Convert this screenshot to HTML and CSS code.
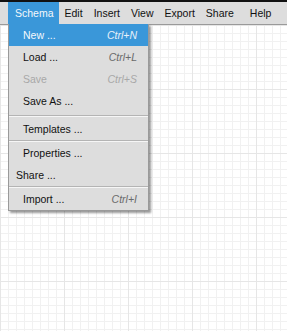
FILE: index.html
```html
<!DOCTYPE html>
<html>
<head>
<meta charset="utf-8">
<link rel="stylesheet" href="styles.css">
</head>
<body>
<div class="app">
  <nav class="menubar">
    <span class="mb-item active">Schema</span>
    <span class="mb-item">Edit</span>
    <span class="mb-item">Insert</span>
    <span class="mb-item">View</span>
    <span class="mb-item">Export</span>
    <span class="mb-item">Share</span>
    <span class="mb-item help">Help</span>
  </nav>
  <div class="canvas"></div>
  <div class="dropdown">
    <div class="dd-item selected"><span>New ...</span><span class="key">Ctrl+N</span></div>
    <div class="dd-item"><span>Load ...</span><span class="key">Ctrl+L</span></div>
    <div class="dd-item disabled"><span>Save</span><span class="key">Ctrl+S</span></div>
    <div class="dd-item"><span>Save As ...</span></div>
    <div class="sep sep1"></div>
    <div class="dd-item"><span>Templates ...</span></div>
    <div class="sep"></div>
    <div class="dd-item"><span>Properties ...</span></div>
    <div class="dd-item outdent"><span>Share ...</span></div>
    <div class="sep"></div>
    <div class="dd-item"><span>Import ...</span><span class="key">Ctrl+I</span></div>
  </div>
</div>
</body>
</html>
```
FILE: styles.css
```css
html, body {
  margin: 0;
  padding: 0;
  height: 100%;
}
body {
  font-family: "Liberation Sans", Arial, sans-serif;
  font-size: 10.5px;
  color: #111;
  background: #fff;
}
.app {
  position: relative;
  height: 100%;
  display: flex;
  flex-direction: column;
}
.menubar {
  display: flex;
  height: 22px;
  background: #dddddd;
  border-top: 2px solid #111;
  border-bottom: 1px solid #9a9a9a;
  padding-left: 8px;
}
.mb-item {
  display: flex;
  align-items: center;
  padding: 0 5px 0 7px;
}
.mb-item + .mb-item {
  padding: 0 5px 0 6px;
}
.mb-item.active {
  background: #3a97d9;
  color: #f4f8fc;
}
.mb-item.help {
  margin-left: 5px;
}
.canvas {
  flex: 1;
  background-color: #fff;
  background-image:
    linear-gradient(to right, #e6e6e6 1px, transparent 1px),
    linear-gradient(to bottom, #e6e6e6 1px, transparent 1px),
    linear-gradient(to right, #f1f1f1 1px, transparent 1px),
    linear-gradient(to bottom, #f1f1f1 1px, transparent 1px);
  background-size: 64px 64px, 64px 64px, 8px 8px, 8px 8px;
}
.dropdown {
  position: absolute;
  top: 24px;
  left: 8px;
  width: 139px;
  background: #dddddd;
  border: 1px solid #9a9a9a;
  border-top: none;
  box-shadow: 2px 2px 2px rgba(0, 0, 0, 0.4);
}
.dd-item {
  display: flex;
  justify-content: space-between;
  align-items: center;
  height: 22px;
  padding: 0 11px 0 14px;
}
.dd-item.selected {
  background: #3a97d9;
  color: #f4f8fc;
}
.dd-item.disabled {
  color: #a8a8a8;
}
.dd-item.outdent {
  padding-left: 7px;
}
.key {
  font-style: italic;
  color: #6a6a6a;
}
.selected .key {
  color: #e8f1fa;
}
.disabled .key {
  color: #a8a8a8;
}
.sep {
  height: 0;
  border-top: 1px solid #b4b4b4;
  border-bottom: 1px solid #f6f6f6;
  margin: 0;
}
.sep1 {
  margin: 3px 0 1px;
}
```
